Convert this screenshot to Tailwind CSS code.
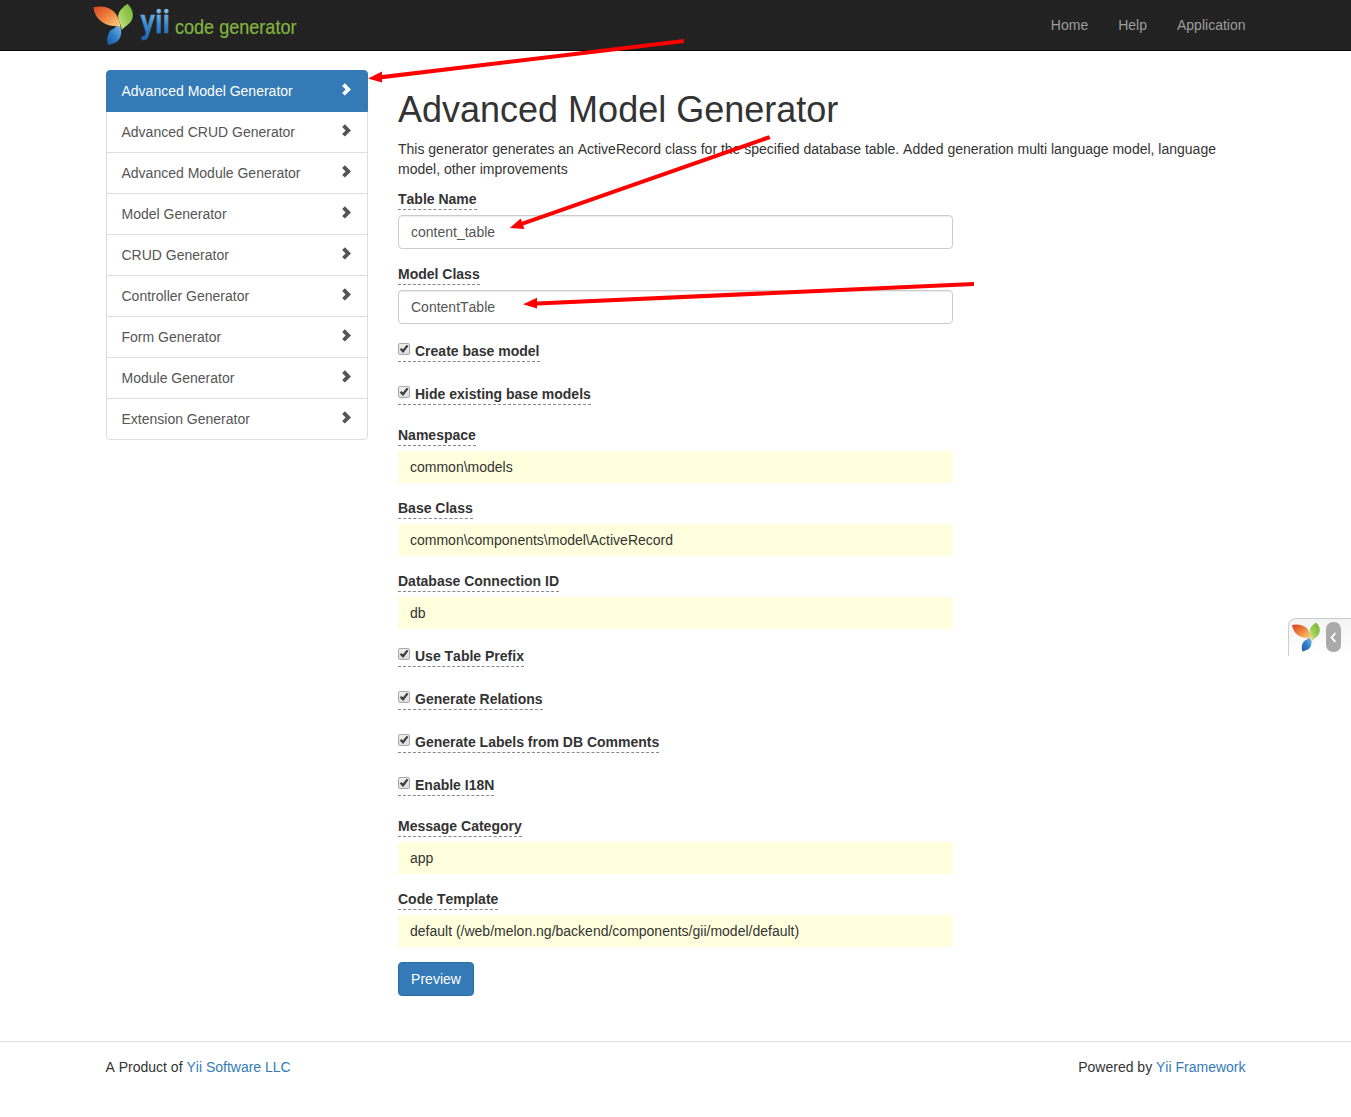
<!DOCTYPE html>
<html lang="en">
<head>
<meta charset="utf-8">
<title>Advanced Model Generator</title>
<script src="https://cdn.jsdelivr.net/npm/@tailwindcss/browser@4"></script>
</head>
<body class="relative h-[1117px] overflow-hidden bg-white font-['Liberation_Sans',Arial,sans-serif] text-[14px] leading-5 text-[#333] [font-kerning:none]">
<svg width="0" height="0" class="absolute">
  <defs>
    <linearGradient id="or" x1="0" y1="0" x2="1" y2="1"><stop offset="0" stop-color="#dc3f22"/><stop offset=".45" stop-color="#ee7f3c"/><stop offset="1" stop-color="#fde08a"/></linearGradient>
    <linearGradient id="gr" x1="1" y1="0" x2="0" y2="1"><stop offset="0" stop-color="#6fb536"/><stop offset=".5" stop-color="#98ca52"/><stop offset="1" stop-color="#dcec9a"/></linearGradient>
    <linearGradient id="bl" x1="1" y1="0" x2="0" y2="1"><stop offset="0" stop-color="#7fb9e6"/><stop offset=".5" stop-color="#2f7fc6"/><stop offset="1" stop-color="#1a59a4"/></linearGradient>
    <linearGradient id="yi" gradientUnits="userSpaceOnUse" x1="0" y1="9" x2="0" y2="40"><stop offset="0" stop-color="#86c0ea"/><stop offset=".5" stop-color="#3d88cc"/><stop offset="1" stop-color="#1c62ae"/></linearGradient>
    <symbol id="leaf" viewBox="24 11 120 125">
      <path fill="url(#gr)" d="M127 11C145 28 148 50 136 66C128 77 116 80 110 91C109 74 98 62 99 48C101 30 115 20 127 11Z"/>
      <path fill="url(#or)" d="M24 22C45 17 68 20 84 33C97 45 104 62 107 86C101 77 95 79 84 78C58 76 30 60 24 22Z"/>
      <path fill="url(#bl)" d="M92 79C101 76 109 84 108 96C108 112 100 124 90 128C82 132 74 133 69 136C64 120 65 106 73 95C79 86 88 88 92 79Z"/>
    </symbol>
    <symbol id="chev" viewBox="0 0 9 13"><path fill="currentColor" d="M2.9 .3L9 6.4L2.9 12.5L.1 9.9L3.6 6.4L.1 2.9Z"/></symbol>
    <symbol id="check" viewBox="0 0 12 12"><path fill="none" stroke="#3c3c3c" stroke-width="2.2" d="M2.6 5.8L5 8.3L9.6 2.4"/></symbol>
  </defs>
</svg>

<header class="h-[51px] border-b border-[#080808] bg-[#222]">
  <div class="mx-auto flex h-[50px] w-[1170px] justify-between pr-[15px]">
    <svg class="ml-0.5 h-[50px] w-[215px]" viewBox="92.5 0 215 50">
      <use href="#leaf" x="92.7" y="3.7" width="40" height="41.6"/>
      <text x="140" y="33" font-family="Roboto" font-weight="500" font-size="33" textLength="29.5" lengthAdjust="spacingAndGlyphs" fill="url(#yi)" stroke="url(#yi)" stroke-width=".5">yii</text>
      <text x="174.5" y="33.6" font-family="Liberation Sans" font-size="21" textLength="121.5" lengthAdjust="spacingAndGlyphs" fill="#82b440" stroke="#82b440" stroke-width=".2">code generator</text>
    </svg>
    <nav class="flex items-center gap-[30px] text-[#9d9d9d]"><a>Home</a><a>Help</a><a>Application</a></nav>
  </div>
</header>

<div class="mx-auto flex h-[990px] w-[1170px] px-[15px] pt-[19px]">
  <nav class="mr-[30px] w-[262.5px] shrink-0 text-[#555]" id="menu"></nav>
  <main class="w-[847.5px] pt-5">
    <h1 class="mb-[10px] h-[39px] text-[36px] leading-[39px]">Advanced Model Generator</h1>
    <p class="mb-[10px]">This generator generates an ActiveRecord class for the specified database table. Added generation multi language model, language model, other improvements</p>
    <form class="w-[555px]">
      <div id="fields"></div>
      <button type="button" class="block h-[34px] w-[76px] rounded border border-[#2e6da4] bg-[#337ab7] text-white">Preview</button>
    </form>
  </main>
</div>

<footer class="border-t border-[#ddd] pt-[15px]">
  <div class="mx-auto flex w-[1170px] justify-between px-[15px]">
    <p>A Product of <a class="text-[#337ab7]">Yii Software LLC</a></p>
    <p>Powered by <a class="text-[#337ab7]">Yii Framework</a></p>
  </div>
</footer>

<div class="absolute top-[618px] right-0 flex h-[38px] w-[63px] rounded-tl-lg border-t border-l border-[#ccc] bg-linear-to-b from-[#f3f3f3] to-white pt-[3px] pl-[3px]">
  <svg class="h-[30px] w-[28px]"><use href="#leaf" width="28" height="30"/></svg>
  <span class="ml-[6px] flex h-[30px] w-[15px] items-center justify-center rounded-[7px] bg-[#aaa]">
    <svg width="7" height="11" viewBox="0 0 7 11"><path d="M5.4 1L1.6 5.5L5.4 10" fill="none" stroke="#fff" stroke-width="1.9"/></svg>
  </span>
</div>

<svg class="absolute top-0 left-0" width="1351" height="400" fill="red">
  <path d="M368 78.5L382 71.4V75.1L684 39V43L382 79.2V82.4Z"/>
  <path d="M509.8 228L520.7 218.4L521.9 221.7L768.9 135.2L770.6 138.9L523.1 225.6L524.4 229Z"/>
  <path d="M523 304.3L537 297.8V301.5L974 282V286L537 305.6V308.5Z"/>
</svg>

<script>
const items = ['Advanced Model Generator','Advanced CRUD Generator','Advanced Module Generator','Model Generator','CRUD Generator','Controller Generator','Form Generator','Module Generator','Extension Generator'];
document.getElementById('menu').innerHTML = items.map((t, i) =>
  `<a class="flex justify-between border px-[15px] pt-[10px] ${i ? '-mt-px border-[#ddd]' : 'relative z-10 rounded-t border-[#337ab7] bg-[#337ab7] text-white'} ${i === items.length - 1 ? 'rounded-b' : ''} h-[42px]"><span>${t}</span><svg class="mt-[2px] mr-[1.5px] h-[13px] w-[9px]"><use href="#chev" width="9" height="13"/></svg></a>`).join('');

const label = t => `<label class="mb-[5px] block h-[21px] w-fit border-b border-dashed border-[#888] font-bold">${t}</label>`;
const input = (t, v) => `<div class="mb-[15px]">${label(t)}<input value="${v}" class="block h-[34px] w-full rounded border border-[#ccc] px-3 text-[#555] shadow-[inset_0_1px_1px_rgba(0,0,0,.075)] [font-kerning:none]"></div>`;
const sticky = (t, v) => `<div class="mb-[15px]">${label(t)}<div class="h-8 bg-[#ffffdd] px-3 py-1.5">${v}</div></div>`;
const checks = a => `<div class="mb-5 flex flex-col gap-[22px] pt-[2px]">${a.map(t =>
  `<label class="flex h-[21px] w-fit gap-[5px] border-b border-dashed border-[#888] font-bold"><span class="mt-[2px] size-3 rounded-[2px] border border-[#aaa] bg-linear-to-b from-[#eee] to-[#ddd]"><svg class="-m-px size-3"><use href="#check" width="12" height="12"/></svg></span>${t}</label>`).join('')}</div>`;
document.getElementById('fields').innerHTML =
  input('Table Name', 'content_table') + input('Model Class', 'ContentTable') +
  checks(['Create base model', 'Hide existing base models']) +
  sticky('Namespace', 'common\\models') + sticky('Base Class', 'common\\components\\model\\ActiveRecord') + sticky('Database Connection ID', 'db') +
  checks(['Use Table Prefix', 'Generate Relations', 'Generate Labels from DB Comments', 'Enable I18N']) +
  sticky('Message Category', 'app') + sticky('Code Template', 'default (/web/melon.ng/backend/components/gii/model/default)');
</script>
</body>
</html>
